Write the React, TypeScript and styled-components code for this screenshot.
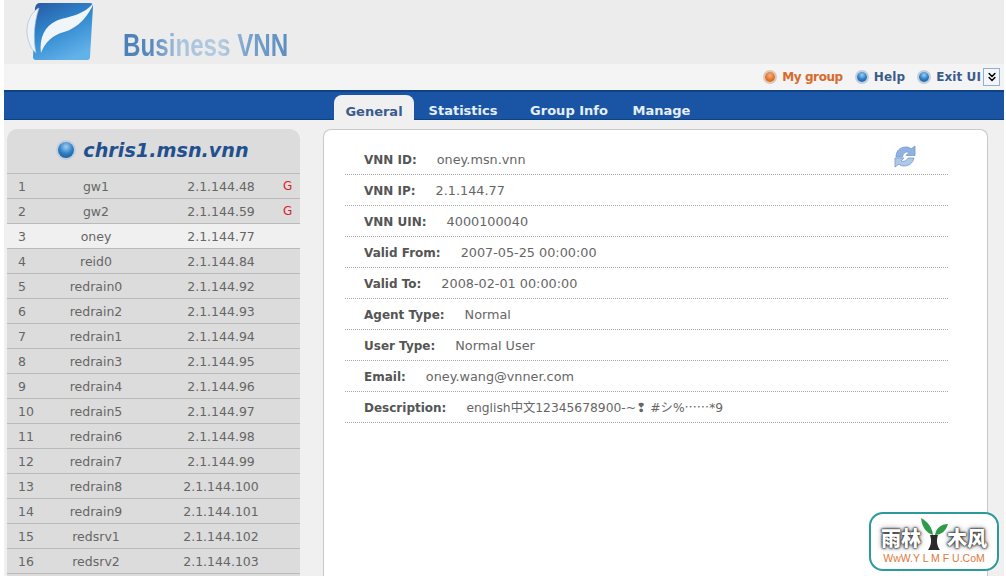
import React from 'react';
import styled, { createGlobalStyle } from 'styled-components';
import { ChevronsDown } from 'lucide-react';

const hosts = [
  { name: 'gw1', ip: '2.1.144.48', gateway: true },
  { name: 'gw2', ip: '2.1.144.59', gateway: true },
  { name: 'oney', ip: '2.1.144.77', selected: true },
  { name: 'reid0', ip: '2.1.144.84' },
  { name: 'redrain0', ip: '2.1.144.92' },
  { name: 'redrain2', ip: '2.1.144.93' },
  { name: 'redrain1', ip: '2.1.144.94' },
  { name: 'redrain3', ip: '2.1.144.95' },
  { name: 'redrain4', ip: '2.1.144.96' },
  { name: 'redrain5', ip: '2.1.144.97' },
  { name: 'redrain6', ip: '2.1.144.98' },
  { name: 'redrain7', ip: '2.1.144.99' },
  { name: 'redrain8', ip: '2.1.144.100' },
  { name: 'redrain9', ip: '2.1.144.101' },
  { name: 'redsrv1', ip: '2.1.144.102' },
  { name: 'redsrv2', ip: '2.1.144.103' },
];

const details = [
  { label: 'VNN ID:', value: 'oney.msn.vnn' },
  { label: 'VNN IP:', value: '2.1.144.77' },
  { label: 'VNN UIN:', value: '4000100040' },
  { label: 'Valid From:', value: '2007-05-25 00:00:00' },
  { label: 'Valid To:', value: '2008-02-01 00:00:00' },
  { label: 'Agent Type:', value: 'Normal' },
  { label: 'User Type:', value: 'Normal User' },
  { label: 'Email:', value: 'oney.wang@vnner.com' },
];

const GlobalStyle = createGlobalStyle`
  html, body {
    margin: 0;
    padding: 0;
    background: #fff;
    overflow: hidden;
  }
  body {
    font-family: "DejaVu Sans", Verdana, sans-serif;
  }
`;

const Page = styled.div`
  position: relative;
  width: 1006px;
  height: 576px;
  padding: 0 2px 0 4px;
  box-sizing: border-box;
  overflow: hidden;
  display: flex;
  flex-direction: column;
`;

const Header = styled.header`
  height: 64px;
  background: #ececec;
  display: flex;
  align-items: flex-start;
  padding-left: 22px;
  flex-shrink: 0;
`;

const LogoMark = styled.svg`
  margin-top: 1px;
  width: 70px;
  height: 62px;
`;

const LogoText = styled.div`
  margin: 28px 0 0 27px;
  font-family: "Liberation Sans", Arial, sans-serif;
  font-size: 31px;
  line-height: 36px;
  font-weight: 700;
  white-space: nowrap;
  transform: scaleX(0.78);
  transform-origin: left center;
  color: transparent;
  background: linear-gradient(90deg, #4a7fb8 0%, #5a8abc 18%, #a9c3dc 34%, #b4cbe0 60%, #7aa3cb 75%, #5b8dbf 100%);
  -webkit-background-clip: text;
  background-clip: text;
`;

const UserBar = styled.div`
  height: 26px;
  background: #f4f4f4;
  display: flex;
  align-items: center;
  justify-content: flex-end;
  padding-right: 4px;
  flex-shrink: 0;
`;

const UserLink = styled.a<{ $active?: boolean }>`
  display: flex;
  align-items: center;
  gap: 7px;
  margin-left: 14px;
  font-size: 12px;
  font-weight: 700;
  letter-spacing: ${({ $active }) => ($active ? '-0.4px' : '0.1px')};
  color: ${({ $active }) => ($active ? '#d9692c' : '#3b5b8c')};
`;

const Orb = styled.span<{ $size: number; $orange?: boolean }>`
  display: inline-block;
  width: ${({ $size }) => $size}px;
  height: ${({ $size }) => $size}px;
  border-radius: 50%;
  flex-shrink: 0;
  background: ${({ $orange }) =>
    $orange
      ? 'radial-gradient(circle at 50% 35%, #f6b27e 0%, #e2722a 55%, #c9581a 100%)'
      : 'radial-gradient(circle at 50% 30%, #9fcdf2 0%, #2f7fc4 50%, #17508f 100%)'};
  box-shadow: 0 0 0 2px ${({ $orange }) => ($orange ? '#d9c9b8' : '#c2cedb')};
`;

const MenuToggle = styled.button`
  width: 17px;
  height: 18px;
  margin-left: 2px;
  padding: 0;
  border: 1px solid #8fb0d6;
  background: #f4f6fa;
  display: flex;
  align-items: center;
  justify-content: center;
  color: #000;
`;

const NavBar = styled.nav`
  height: 30px;
  box-sizing: border-box;
  background: #1a55a5;
  border-top: 2px solid #0f4185;
  border-bottom: 1px solid #0f4185;
  display: flex;
  align-items: flex-end;
  padding-left: 330px;
  flex-shrink: 0;
`;

const Tab = styled.div<{ $active?: boolean; $width: number }>`
  width: ${({ $width }) => $width}px;
  height: 25px;
  margin-bottom: ${({ $active }) => ($active ? '-1px' : '0')};
  border-radius: 8px 8px 0 0;
  background: ${({ $active }) => ($active ? '#f0f0f0' : 'transparent')};
  color: ${({ $active }) => ($active ? '#3b5b8c' : '#e6eff9')};
  font-size: 13px;
  font-weight: 700;
  line-height: 33px;
  text-align: center;
  white-space: nowrap;
`;

const Body = styled.main`
  flex: 1;
  min-height: 0;
  background: #f0f0f0;
  display: flex;
  align-items: stretch;
  padding: 9px 16px 0 3px;
  gap: 23px;
`;

const Sidebar = styled.aside`
  width: 293px;
  flex-shrink: 0;
  background: #dcdcdc;
  border-radius: 10px 10px 0 0;
`;

const SidebarTitle = styled.h2`
  height: 42px;
  margin: 0;
  padding-bottom: 2px;
  border-bottom: 1px solid #bdbdbd;
  display: flex;
  align-items: center;
  justify-content: center;
  gap: 9px;
  font-size: 19.2px;
  font-style: italic;
  font-weight: 700;
  color: #22508f;
`;

const HostRow = styled.div<{ $selected?: boolean }>`
  height: 25px;
  box-sizing: border-box;
  display: grid;
  grid-template-columns: 30px 118px 124px 1fr;
  align-items: center;
  border-bottom: 1px solid #b9b9b9;
  background: ${({ $selected }) => ($selected ? '#f0f0f0' : '#dcdcdc')};
  font-size: 12.5px;
  color: #666;
`;

const HostIndex = styled.span`
  padding-left: 11px;
`;

const HostName = styled.span`
  text-align: center;
`;

const HostIp = styled.span`
  padding-left: 8px;
  text-align: center;
`;

const GatewayMark = styled.span`
  padding-left: 4px;
  font-size: 12px;
  color: #d8232a;
`;

const DetailPanel = styled.section`
  position: relative;
  flex: 1;
  background: #fff;
  border: 1px solid #c9c9c9;
  border-bottom: 0;
  border-radius: 8px 8px 0 0;
  padding: 14px 39px 0 21px;
`;

const DetailRow = styled.div`
  height: 31px;
  box-sizing: border-box;
  border-bottom: 1px dotted #a8a8a8;
  padding-left: 19px;
  display: flex;
  align-items: baseline;
  line-height: 32px;
  white-space: nowrap;
`;

const DetailLabel = styled.span`
  font-size: 12px;
  font-weight: 700;
  color: #555;
  margin-right: 20px;
`;

const DetailValue = styled.span<{ $compact?: boolean }>`
  font-size: ${({ $compact }) => ($compact ? '12.3px' : '12.8px')};
  color: #666;
`;

const Cjk = styled.span`
  font-family: "Noto Sans CJK SC", sans-serif;
  line-height: 1;
`;

const RefreshIcon = styled.svg`
  position: absolute;
  top: 14px;
  left: 569px;
  width: 24px;
  height: 24px;
`;

const Watermark = styled.div`
  position: absolute;
  left: 869px;
  top: 512px;
  width: 130px;
  height: 59px;
  box-sizing: border-box;
  background: #fff;
  border: 2px solid #2a9a9a;
  border-radius: 14px;
  display: flex;
  flex-direction: column;
  align-items: center;
`;

const WatermarkTitle = styled.div`
  display: flex;
  align-items: flex-end;
  height: 37px;
  font-family: "Noto Sans CJK SC", sans-serif;
  font-size: 20px;
  line-height: 26px;
  font-weight: 900;
  color: #fff;
  text-shadow: 0 0 2px #333, 0 0 2px #333, 0 0 3px #444, 0 0 6px #888;
`;

const Sprout = styled.svg`
  width: 28px;
  height: 37px;
  margin: 0 -1px;
`;

const WatermarkUrl = styled.div`
  font-family: "Liberation Sans", Arial, sans-serif;
  font-size: 10.5px;
  line-height: 14px;
  color: #e0793a;
  white-space: pre;
`;

export default function App() {
  return (
    <>
      <GlobalStyle />
      <Page>
        <Header>
          <LogoMark viewBox="0 0 70 62">
            <defs>
              <linearGradient id="logoBody" x1="0.1" y1="0" x2="0.6" y2="1">
                <stop offset="0" stopColor="#2a5ca8" />
                <stop offset="0.45" stopColor="#2f86cc" />
                <stop offset="1" stopColor="#62b2ea" />
              </linearGradient>
            </defs>
            <path
              d="M14 2 L64 2 Q67 2 67 5 L64 56 Q64 59 61 59 L10 59 Q7 59 7 56 L9 7 Q10 2 14 2 Z"
              fill="url(#logoBody)"
            />
            <path
              d="M68 1 C63 15 52 27 38 31 C27 34 19 41 15 52 C13 37 19 25 30 20 C42 15 58 15 68 1 Z"
              fill="#f0f5fa"
            />
            <path
              d="M11 8 C1 16 -3 32 6 48 L10 52 C7 37 8 22 13 7 Z"
              fill="#eef3f8"
              stroke="#a9bdd5"
              strokeWidth="0.7"
            />
          </LogoMark>
          <LogoText>Business VNN</LogoText>
        </Header>

        <UserBar>
          <UserLink $active>
            <Orb $size={10} $orange />
            My group
          </UserLink>
          <UserLink>
            <Orb $size={10} />
            Help
          </UserLink>
          <UserLink>
            <Orb $size={10} />
            Exit UI
          </UserLink>
          <MenuToggle>
            <ChevronsDown size={14} strokeWidth={2.5} />
          </MenuToggle>
        </UserBar>

        <NavBar>
          <Tab $active $width={80}>General</Tab>
          <Tab $width={98}>Statistics</Tab>
          <Tab $width={114}>Group Info</Tab>
          <Tab $width={71}>Manage</Tab>
        </NavBar>

        <Body>
          <Sidebar>
            <SidebarTitle>
              <Orb $size={16} />
              chris1.msn.vnn
            </SidebarTitle>
            {hosts.map((host, i) => (
              <HostRow key={host.name} $selected={host.selected}>
                <HostIndex>{i + 1}</HostIndex>
                <HostName>{host.name}</HostName>
                <HostIp>{host.ip}</HostIp>
                {host.gateway && <GatewayMark>G</GatewayMark>}
              </HostRow>
            ))}
          </Sidebar>

          <DetailPanel>
            <RefreshIcon viewBox="0 0 24 24">
              <path d="M3 13 C3 6 8 3 13 3 C15 3 17 3.5 18 5 L22 2 L22 11.5 L13 11.5 L16 8.5 C13 7 10 9 9.5 13 Z" fill="#8fb2e2" stroke="#7398cc" strokeWidth="0.8" />
              <path d="M21 14 C20 19 16 22 11 22 C9 22 7 21.5 6 20 L2 23 L2 14 L11 14 L8 17 C11 18 14 16.5 15 14 Z" fill="#aec8ea" stroke="#7398cc" strokeWidth="0.8" />
            </RefreshIcon>
            {details.map(d => (
              <DetailRow key={d.label}>
                <DetailLabel>{d.label}</DetailLabel>
                <DetailValue>{d.value}</DetailValue>
              </DetailRow>
            ))}
            <DetailRow>
              <DetailLabel>Description:</DetailLabel>
              <DetailValue $compact>
                english<Cjk>中文</Cjk>12345678900-~❢ #<Cjk>シ</Cjk>%<Cjk>……</Cjk>*9
              </DetailValue>
            </DetailRow>
          </DetailPanel>
        </Body>

        <Watermark>
          <WatermarkTitle>
            雨林
            <Sprout viewBox="0 0 28 37">
              <path d="M8 36 C11 32 12 27 10 21 L18 21 C16 27 17 32 20 36 Z" fill="#2b2b2b" />
              <path d="M13 21 C12 13 8 8 1 4 C2 13 6 19 13 21 Z" fill="#2e9a4a" />
              <path d="M15 21 C16 14 21 10 28 10 C26 17 21 21 15 21 Z" fill="#2e9a4a" />
            </Sprout>
            木风
          </WatermarkTitle>
          <WatermarkUrl>WwW.Y L M F U.CoM</WatermarkUrl>
        </Watermark>
      </Page>
    </>
  );
}
